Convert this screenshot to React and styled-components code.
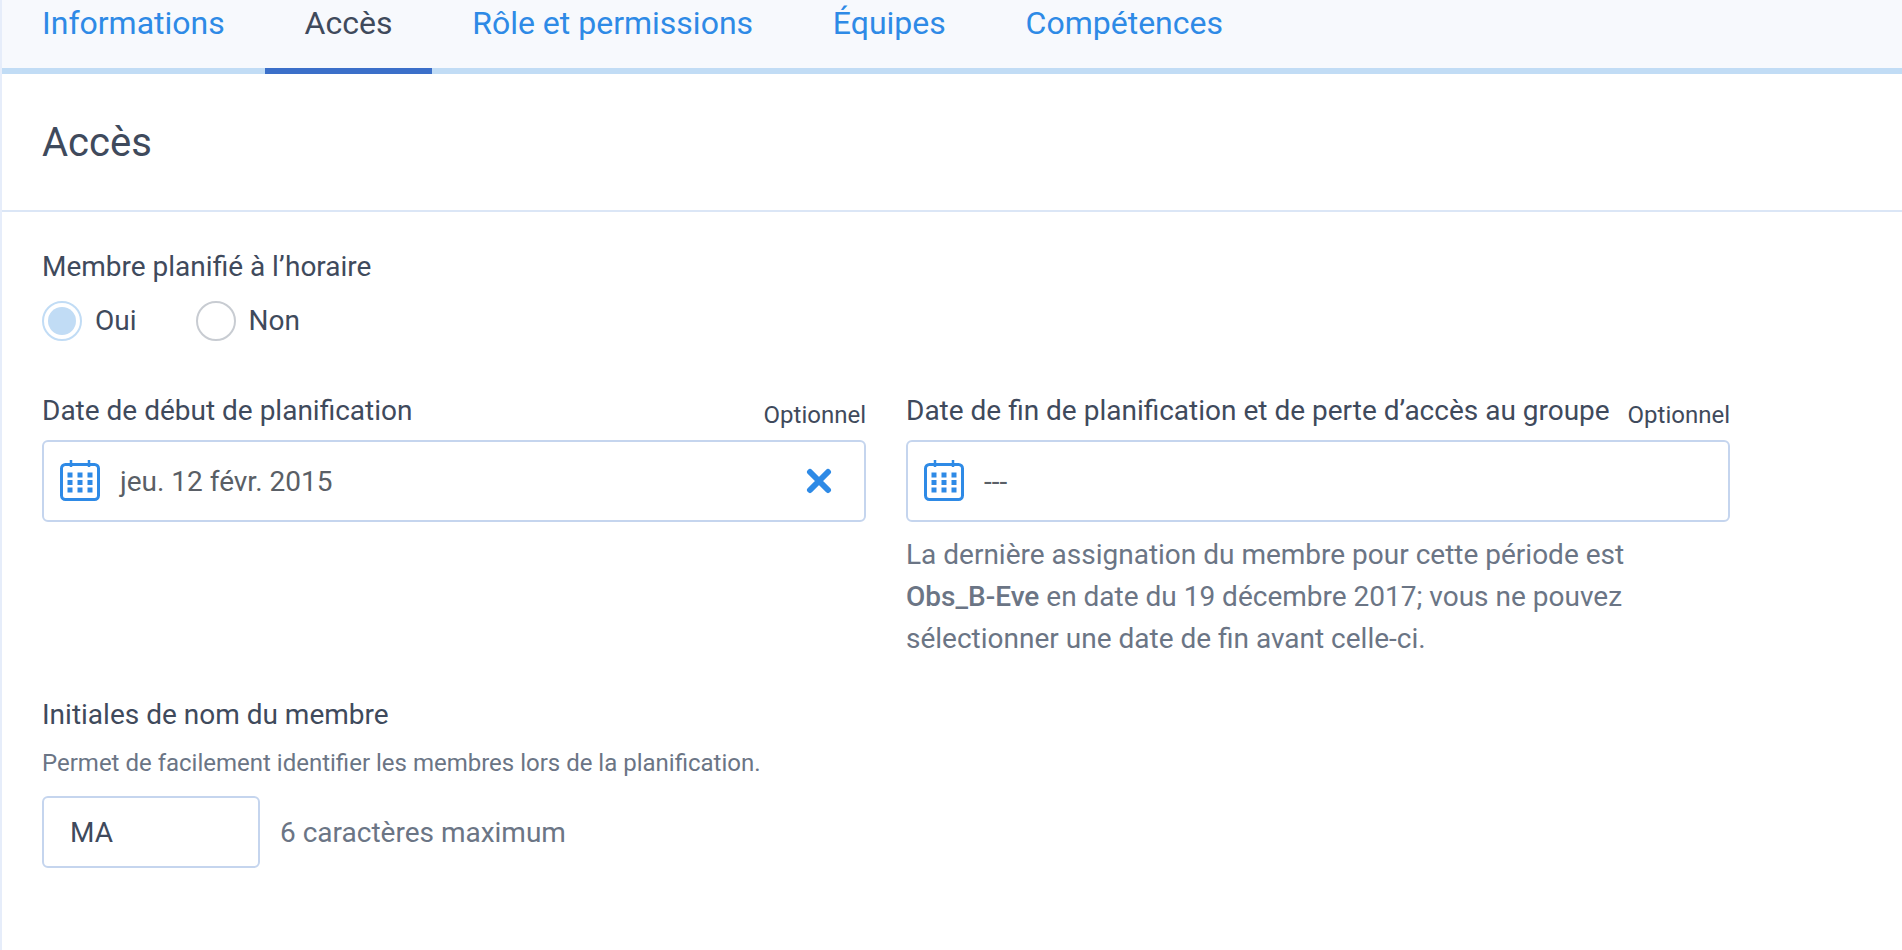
import React from "react"
import styled, { createGlobalStyle } from "styled-components"

const GlobalStyle = createGlobalStyle`
  html, body {
    margin: 0;
    padding: 0;
    background: #fff;
    font-family: Roboto, "Liberation Sans", sans-serif;
    color: #3f4a5c;
  }
`

const Page = styled.div`
  width: 1902px;
  height: 950px;
  box-sizing: border-box;
  border-left: 2px solid #e6edfa;
  overflow: hidden;
`

const TabBar = styled.div`
  display: flex;
  height: 74px;
  box-sizing: border-box;
  background: #f7f9fd;
  border-bottom: 6px solid #c1dcf5;
`

const Tab = styled.div`
  height: 74px;
  box-sizing: border-box;
  padding: 5px 39.9px 0;
  font-size: 32px;
  line-height: 36px;
  color: ${(p) => (p.$active ? "#3f4a5c" : "#2e8ae6")};
  border-bottom: 6px solid ${(p) => (p.$active ? "#3b6fc9" : "transparent")};

  &:first-child {
    padding-left: 40px;
  }
`

const Header = styled.div`
  height: 138px;
  box-sizing: border-box;
  padding: 46px 40px 0;
  border-bottom: 2px solid #dbe6f6;
`

const Title = styled.h1`
  margin: 0;
  font-size: 40px;
  line-height: 46px;
  font-weight: 400;
  color: #3f4a5c;
`

const Body = styled.div`
  padding: 38px 40px 0;
`

const Label = styled.div`
  font-size: 28px;
  line-height: 34px;
  color: #3f4a5c;
`

const RadioRow = styled.div`
  display: flex;
  gap: 59px;
  margin-top: 17px;
`

const RadioItem = styled.div`
  display: flex;
  align-items: center;
  gap: 13px;
  font-size: 28px;
  line-height: 40px;
`

const RadioMark = styled.span`
  width: 40px;
  height: 40px;
  box-sizing: border-box;
  border-radius: 50%;
  border: ${(p) => (p.$checked ? "2px solid #c1dcf5" : "2.5px solid #c8ccd2")};
  padding: 4px;
  display: block;

  &::after {
    content: "";
    display: ${(p) => (p.$checked ? "block" : "none")};
    width: 100%;
    height: 100%;
    border-radius: 50%;
    background: #c1dcf5;
  }
`

const Columns = styled.div`
  display: flex;
  gap: 40px;
  margin-top: 54px;
`

const Column = styled.div`
  width: 824px;
`

const LabelRow = styled.div`
  display: flex;
  justify-content: space-between;
  align-items: flex-end;
  height: 45px;
  padding-bottom: 12px;
  box-sizing: border-box;
`

const Optional = styled.span`
  font-size: 24px;
  line-height: 30px;
  color: #3f4a5c;
  position: relative;
  top: 2px;
`

const DateField = styled.div`
  height: 82px;
  box-sizing: border-box;
  border: 2px solid #c5d5ee;
  border-radius: 6px;
  display: flex;
  align-items: center;
  padding: 0 32px 0 16px;
  gap: 20px;
`

const DateValue = styled.span`
  flex: 1;
  font-size: 28px;
  line-height: 34px;
  padding-top: 2px;
  color: #5a5f66;
`

const Help = styled.p`
  margin: 12px 0 0;
  font-size: 28px;
  line-height: 42px;
  color: #6b7585;

  strong {
    font-weight: 500;
  }
`

const InitialsLabel = styled(Label)`
  margin-top: 38px;
`

const Hint = styled.div`
  margin-top: 16px;
  font-size: 24px;
  line-height: 30px;
  color: #6b7585;
`

const InitialsRow = styled.div`
  display: flex;
  align-items: center;
  gap: 20px;
  margin-top: 18px;
`

const InitialsBox = styled.div`
  width: 218px;
  height: 72px;
  box-sizing: border-box;
  border: 2px solid #c5d5ee;
  border-radius: 6px;
  padding-left: 26px;
  display: flex;
  align-items: center;
  font-size: 28px;
  color: #3f4a5c;
`

const Limit = styled.span`
  font-size: 28px;
  color: #6b7585;
`

const CalendarIcon = () => {
  const cells = []
  for (let r = 0; r < 3; r++) {
    for (let c = 0; c < 3; c++) {
      cells.push(<rect key={`${r}-${c}`} x={7.5 + c * 10} y={12.5 + r * 7.5} width="5" height="5" fill="#2e8ae6" />)
    }
  }
  return (
    <svg width="40" height="42" viewBox="0 0 40 42" fill="none">
      <rect x="1.5" y="4.5" width="37" height="35" rx="4" stroke="#2e8ae6" strokeWidth="3" />
      <path d="M11 0v7M29 0v7" stroke="#2e8ae6" strokeWidth="2.5" />
      {cells}
    </svg>
  )
}

const CloseIcon = () => (
  <svg width="26" height="26" viewBox="0 0 26 26" fill="none">
    <path d="M4 4l18 18M22 4L4 22" stroke="#2e8ae6" strokeWidth="6" strokeLinecap="round" />
  </svg>
)

const tabs = ["Informations", "Accès", "Rôle et permissions", "Équipes", "Compétences"]

const App = () => {
  return (
    <Page>
      <GlobalStyle />
      <TabBar>
        {tabs.map((t) => (
          <Tab key={t} $active={t === "Accès"}>{t}</Tab>
        ))}
      </TabBar>
      <Header>
        <Title>Accès</Title>
      </Header>
      <Body>
        <Label>Membre planifié à l’horaire</Label>
        <RadioRow>
          <RadioItem><RadioMark $checked />Oui</RadioItem>
          <RadioItem><RadioMark />Non</RadioItem>
        </RadioRow>
        <Columns>
          <Column>
            <LabelRow>
              <Label>Date de début de planification</Label>
              <Optional>Optionnel</Optional>
            </LabelRow>
            <DateField>
              <CalendarIcon />
              <DateValue>jeu. 12 févr. 2015</DateValue>
              <CloseIcon />
            </DateField>
          </Column>
          <Column>
            <LabelRow>
              <Label>Date de fin de planification et de perte d’accès au groupe</Label>
              <Optional>Optionnel</Optional>
            </LabelRow>
            <DateField>
              <CalendarIcon />
              <DateValue>---</DateValue>
            </DateField>
            <Help>
              La dernière assignation du membre pour cette période est<br />
              <strong>Obs_B-Eve</strong> en date du 19 décembre 2017; vous ne pouvez<br />
              sélectionner une date de fin avant celle-ci.
            </Help>
          </Column>
        </Columns>
        <InitialsLabel>Initiales de nom du membre</InitialsLabel>
        <Hint>Permet de facilement identifier les membres lors de la planification.</Hint>
        <InitialsRow>
          <InitialsBox>MA</InitialsBox>
          <Limit>6 caractères maximum</Limit>
        </InitialsRow>
      </Body>
    </Page>
  )
}

export default App
